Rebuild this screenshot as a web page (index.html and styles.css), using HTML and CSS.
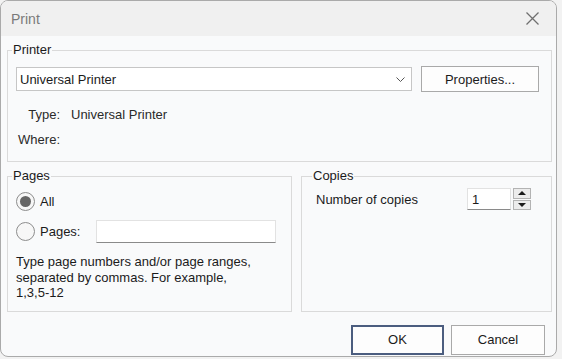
FILE: index.html
```html
<!DOCTYPE html>
<html lang="en">
<head>
  <meta charset="UTF-8" />
  <title>Print</title>
  <link rel="stylesheet" href="styles.css">
</head>
<body>

<div class="dialog">
  <div class="titlebar">
    <span class="title">Print</span>
    <svg class="close" width="13" height="13" viewBox="0 0 13 13">
      <path d="M0.5 0.5 L12.5 12.5 M12.5 0.5 L0.5 12.5" stroke="#6f6f6f" stroke-width="1.3" fill="none"/>
    </svg>
  </div>

  <div class="content">
    <fieldset class="group printer">
      <legend>Printer</legend>
      <div class="printer-row">
        <div class="combo">
          <span>Universal Printer</span>
          <svg width="9" height="5" viewBox="0 0 9 5">
            <path d="M0.5 0.5 L4.5 4.5 L8.5 0.5" stroke="#555" stroke-width="1" fill="none"/>
          </svg>
        </div>
        <button class="btn props">Properties...</button>
      </div>
      <div class="info">
        <span class="label">Type:</span><span>Universal Printer</span>
        <span class="label">Where:</span><span></span>
      </div>
    </fieldset>

    <div class="groups">
      <fieldset class="group pages">
        <legend>Pages</legend>
        <div class="radio-row">
          <span class="radio checked"></span>
          <span class="radio-label">All</span>
        </div>
        <div class="radio-row range">
          <span class="radio"></span>
          <span class="radio-label wide">Pages:</span>
          <input class="field pages-input" type="text" value="">
        </div>
        <p class="hint">Type page numbers and/or page ranges, separated by commas. For example, <span class="nowrap">1,3,5-12</span></p>
      </fieldset>

      <fieldset class="group copies">
        <legend>Copies</legend>
        <div class="copies-row">
          <span class="copies-label">Number of copies</span>
          <input class="field copies-input" type="text" value="1">
          <div class="spinner">
            <span class="spin up"></span>
            <span class="spin down"></span>
          </div>
        </div>
      </fieldset>
    </div>

    <div class="actions">
      <button class="btn ok">OK</button>
      <button class="btn cancel">Cancel</button>
    </div>
  </div>
</div>

</body>
</html>
```

FILE: styles.css
```css
* {
  box-sizing: border-box;
}
body {
  margin: 0;
  background: #f2f2f2;
  font-family: 'Liberation Sans', Arial, sans-serif;
  font-size: 13px;
  color: #1b1b1b;
}
.dialog {
  width: 557px;
  height: 357px;
  border: 1px solid #aaaaaa;
  border-radius: 8px;
  overflow: hidden;
  background: #f9fafb;
}
.titlebar {
  height: 35px;
  background: #f0f0f0;
  display: flex;
  align-items: center;
  justify-content: space-between;
  padding: 0 17px 0 10px;
}
.title {
  font-size: 14px;
  color: #7a7a7a;
}
.content {
  padding: 6px 0 0 6px;
}
.group {
  margin: 0;
  min-width: 0;
  border: 1px solid #dadada;
  padding: 8px 8px 13px;
}
.group legend {
  padding: 0 1px;
  margin-left: -4px;
  line-height: 16px;
  font-size: 13px;
}
.printer {
  width: 545px;
}
.printer-row {
  display: flex;
  align-items: center;
  gap: 9px;
}
.combo {
  width: 396px;
  height: 24px;
  background: #fff;
  border: 1px solid #c6c6c6;
  display: flex;
  align-items: center;
  justify-content: space-between;
  padding: 0 6px 0 3px;
}
.btn {
  font-family: inherit;
  font-size: 13px;
  color: #1b1b1b;
  background: #fdfdfd;
  border: 1px solid #a9a9a9;
  height: 30px;
  padding: 0;
}
.props {
  width: 118px;
  height: 26px;
}
.info {
  display: grid;
  grid-template-columns: 44px auto;
  column-gap: 11px;
  row-gap: 9px;
  margin-top: 15px;
  line-height: 16px;
  color: #2a2a2a;
}
.info .label {
  text-align: right;
}
.groups {
  display: grid;
  grid-template-columns: 285px 251px;
  gap: 9px;
  margin-top: 6px;
}
.pages {
  padding: 7px 8px 10px;
}
.radio-row {
  display: flex;
  align-items: center;
  gap: 5px;
  height: 20px;
}
.radio-row.range {
  height: 23px;
  margin-top: 9px;
}
.radio {
  width: 19px;
  height: 19px;
  border-radius: 50%;
  border: 1px solid #8d8d8d;
  background: #f7f7f7;
  display: flex;
  align-items: center;
  justify-content: center;
  flex: none;
}
.radio.checked::after {
  content: '';
  width: 11px;
  height: 11px;
  border-radius: 50%;
  background: #666;
}
.radio-label.wide {
  width: 51px;
}
.field {
  font-family: inherit;
  font-size: 13px;
  color: #1b1b1b;
  background: #fff;
  border: 1px solid #e2e2e2;
  border-bottom-color: #8a8a8a;
  outline: none;
  margin: 0;
}
.pages-input {
  width: 180px;
  height: 23px;
}
.hint {
  margin: 11px 0 0;
  max-width: 252px;
  line-height: 15.5px;
}
.nowrap {
  white-space: nowrap;
}
.copies {
  padding: 4px 8px 13px 14px;
}
.copies-row {
  display: flex;
  align-items: center;
}
.copies-label {
  width: 151px;
}
.copies-input {
  width: 44px;
  height: 22px;
  padding: 0 4px;
}
.spinner {
  display: flex;
  flex-direction: column;
  gap: 1px;
  margin-left: 2px;
}
.spin {
  width: 18px;
  height: 10.5px;
  border: 1px solid #b3b3b3;
  background: #ececec;
  display: flex;
  align-items: center;
  justify-content: center;
}
.spin.up::after {
  content: '';
  border-left: 4px solid transparent;
  border-right: 4px solid transparent;
  border-bottom: 4px solid #1b1b1b;
}
.spin.down::after {
  content: '';
  border-left: 4px solid transparent;
  border-right: 4px solid transparent;
  border-top: 4px solid #1b1b1b;
}
.actions {
  display: flex;
  justify-content: flex-end;
  gap: 7px;
  margin-top: 13px;
  padding-right: 11px;
}
.ok {
  width: 93px;
  border: 2px solid #4b5d7f;
}
.cancel {
  width: 94px;
}
```
